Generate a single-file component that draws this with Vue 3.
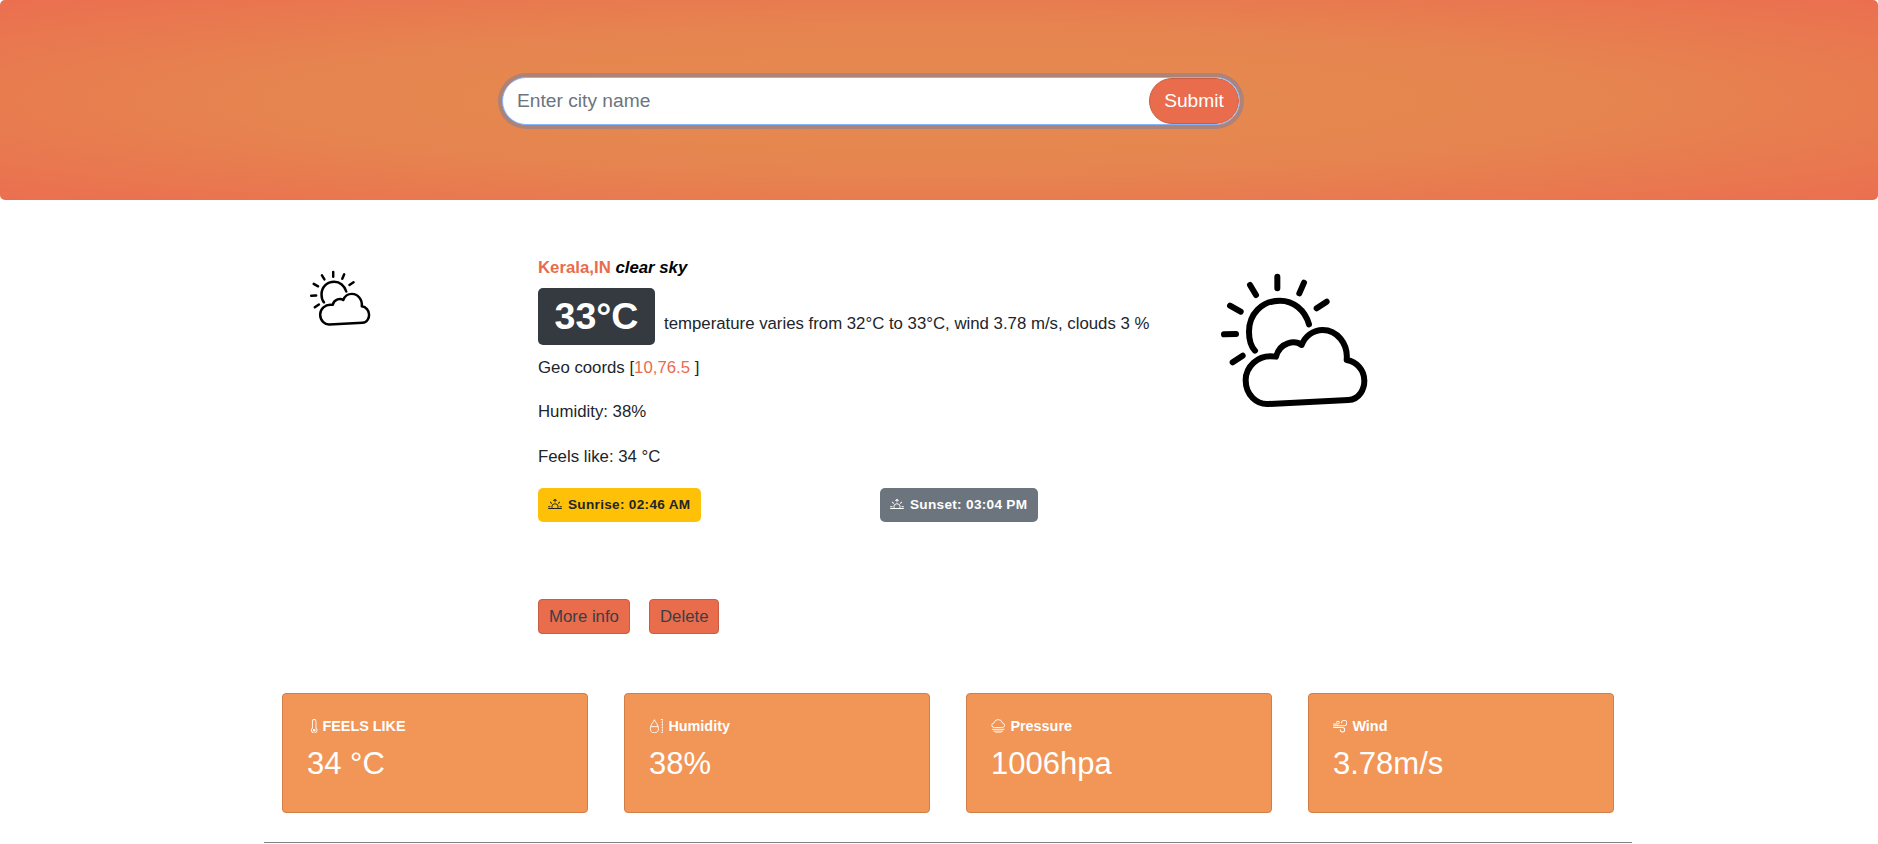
<script setup>
const cloudRays = 'M232 50V85M150 75L168 105M312 68L298 100M380 125L350 145M90 137L122 155M72 223L108 222M128 287L98 307'
const cloudSun = 'M327 193C315 150 280 122 240 122C185 122 147 162 147 215C147 240 152 258 165 272'
const cloudBody = 'M205 432L445 420C480 418 493 385 493 362C493 330 470 305 440 300C445 250 410 210 368 210C340 210 315 228 305 255C285 240 240 245 228 290C170 280 137 325 137 360C137 405 170 434 205 432Z'

const sunrise = 'M7.646 1.146a.5.5 0 0 1 .708 0l1.5 1.5a.5.5 0 0 1-.708.708L8.5 2.707V4.5a.5.5 0 0 1-1 0V2.707l-.646.647a.5.5 0 1 1-.708-.708l1.5-1.5zM2.343 4.343a.5.5 0 0 1 .707 0l1.414 1.414a.5.5 0 0 1-.707.707L2.343 5.05a.5.5 0 0 1 0-.707zm11.314 0a.5.5 0 0 1 0 .707l-1.414 1.414a.5.5 0 1 1-.707-.707l1.414-1.414a.5.5 0 0 1 .707 0zM8 7a3 3 0 0 1 2.599 4.5H5.4A3 3 0 0 1 8 7zm3.71 4.5a4 4 0 1 0-7.418 0H.499a.5.5 0 0 0 0 1h15a.5.5 0 0 0 0-1h-3.79zM0 10a.5.5 0 0 1 .5-.5h2a.5.5 0 0 1 0 1h-2A.5.5 0 0 1 0 10zm13 0a.5.5 0 0 1 .5-.5h2a.5.5 0 0 1 0 1h-2a.5.5 0 0 1-.5-.5z'

const cards = [
  { id: 'feels', label: 'FEELS LIKE', value: '34 °C' },
  { id: 'humidity', label: 'Humidity', value: '38%' },
  { id: 'pressure', label: 'Pressure', value: '1006hpa' },
  { id: 'wind', label: 'Wind', value: '3.78m/s' }
]
</script>

<template>
  <div class="page">
    <header class="hero">
      <form class="search" @submit.prevent>
        <input class="search-input" type="text" placeholder="Enter city name" />
        <button class="search-btn" type="submit">Submit</button>
      </form>
    </header>

    <main class="content">
      <section class="weather">
        <div class="side-icon">
          <svg class="icon-small" viewBox="0 0 570 480" fill="none" stroke="#000" stroke-width="18" stroke-linecap="round" stroke-linejoin="round">
            <path :d="cloudRays" />
            <path :d="cloudSun" />
            <path :d="cloudBody" />
          </svg>
        </div>

        <div class="info">
          <h6 class="title"><span class="city">Kerala,IN</span> <em>clear sky</em></h6>
          <div class="temp-row">
            <span class="temp">33°C</span>
            <span class="temp-text">temperature varies from 32°C to 33°C, wind 3.78 m/s, clouds 3 %</span>
          </div>
          <p class="first">Geo coords [<span class="coords">10,76.5</span> ]</p>
          <p>Humidity: 38%</p>
          <p class="last">Feels like: 34 °C</p>
          <div class="pills">
            <span class="pill pill-sunrise">
              <svg viewBox="0 0 16 16" fill="currentColor"><path :d="sunrise" /></svg>
              Sunrise: 02:46 AM
            </span>
            <span class="pill pill-sunset">
              <svg viewBox="0 0 16 16" fill="currentColor"><path :d="sunrise" /></svg>
              Sunset: 03:04 PM
            </span>
          </div>
          <div class="actions">
            <button class="btn" type="button">More info</button>
            <button class="btn" type="button">Delete</button>
          </div>
        </div>

        <svg class="icon-big" viewBox="0 0 570 480" fill="none" stroke="#000" stroke-width="18" stroke-linecap="round" stroke-linejoin="round">
          <path :d="cloudRays" />
          <path :d="cloudSun" />
          <path :d="cloudBody" />
        </svg>
      </section>

      <section class="cards">
        <div class="card" v-for="card in cards" :key="card.id">
          <div class="card-label" :class="{ tight: card.id === 'feels' }">
            <svg v-if="card.id === 'feels'" viewBox="0 0 16 16" fill="#fff">
              <path d="M8 14a1.5 1.5 0 1 0 0-3 1.5 1.5 0 0 0 0 3z" />
              <path d="M8 0a2.5 2.5 0 0 0-2.5 2.5v7.55a3.5 3.5 0 1 0 5 0V2.5A2.5 2.5 0 0 0 8 0zM6.5 2.5a1.5 1.5 0 1 1 3 0v7.987l.167.15a2.5 2.5 0 1 1-3.333 0l.166-.15V2.5z" />
            </svg>
            <svg v-else-if="card.id === 'humidity'" viewBox="0 0 16 16" fill="none" stroke="#fff" stroke-width="1">
              <path d="M6 .8C5 3.500 1.500 6.500 1.500 10.800a4.500 4.500 0 0 0 9 0C10.500 6.500 7 3.500 6 .8Z" />
              <path d="M2 8.500h8" />
              <path d="M13 .5h2.500v15H13M14 3.500h1.500M14 6.500h1.500M14 9.500h1.500M14 12.500h1.500" />
            </svg>
            <svg v-else-if="card.id === 'pressure'" viewBox="0 0 16 16" fill="none" stroke="#fff" stroke-width="1" stroke-linecap="round">
              <path d="M3.500 9.500A2.500 2.500 0 0 1 3.300 4.500 4.800 4.800 0 0 1 12.700 4.500 2.500 2.500 0 0 1 12.500 9.500Z" />
              <path d="M1.500 11.500h13M3 13.500h10M5 15.500h6" />
            </svg>
            <svg v-else viewBox="0 0 16 16" fill="#fff">
              <path d="M12.500 2A2.500 2.500 0 0 0 10 4.500a.5.5 0 0 1-1 0A3.500 3.500 0 1 1 12.500 8H.5a.5.5 0 0 1 0-1h12a2.500 2.500 0 0 0 0-5zm-7 1a1 1 0 0 0-1 1 .5.5 0 0 1-1 0 2 2 0 1 1 2 2h-5a.5.5 0 0 1 0-1h5a1 1 0 0 0 0-2zM0 9.500A.5.5 0 0 1 .5 9h10.042a3 3 0 1 1-3 3 .5.5 0 0 1 1 0 2 2 0 1 0 2-2H.5a.5.5 0 0 1-.5-.5z" />
            </svg>
            {{ card.label }}
          </div>
          <div class="card-value">{{ card.value }}</div>
        </div>
      </section>

      <hr class="rule" />
    </main>
  </div>
</template>

<style>
html, body {
  margin: 0;
  background: #fff;
  overflow: hidden;
}
</style>

<style scoped>
.page {
  font-family: "Liberation Sans", Arial, sans-serif;
  font-size: 16.8px;
  line-height: 24px;
  color: #212529;
}

.hero {
  height: 200px;
  box-sizing: border-box;
  padding: 77px 0 0 502px;
  border-radius: 5px;
  background: radial-gradient(ellipse at center, #e58c50 0%, #e6844f 52%, #eb6f4f 100%);
}

.search {
  display: flex;
  width: 738px;
  height: 48px;
  box-sizing: border-box;
  border: 1px solid #86b7fe;
  border-radius: 24px;
  background: #fff;
  box-shadow: 0 0 0 4px rgba(120, 125, 160, 0.5);
  overflow: hidden;
}

.search-input {
  flex: 1;
  min-width: 0;
  border: 0;
  outline: 0;
  padding: 0 14px;
  font-family: inherit;
  font-size: 19.2px;
  background: transparent;
}

.search-input::placeholder {
  color: #6c757d;
}

.search-btn {
  width: 90px;
  border: 1px solid #c85d43;
  border-radius: 24px;
  background: #e96c4d;
  color: #fff;
  font-family: inherit;
  font-size: 19.2px;
  padding: 0;
}

.content {
  width: 1368px;
  margin-left: 264px;
}

.weather {
  display: flex;
  height: 493px;
}

.side-icon {
  width: 274px;
  padding: 65px 0 0 37px;
  box-sizing: border-box;
}

.icon-small {
  display: block;
  width: 79px;
  height: 66px;
}

.info {
  width: 662px;
  padding-top: 56px;
  box-sizing: border-box;
}

.icon-big {
  display: block;
  width: 190px;
  height: 160px;
  margin-top: 60px;
}

.title {
  margin: 0 0 8px;
  font-size: 16.8px;
  line-height: 24px;
  font-weight: 700;
  color: #000;
}

.city {
  color: #e96c4d;
}

.temp-row {
  display: flex;
  align-items: flex-end;
  gap: 9px;
  margin: 0 0 11px;
}

.temp {
  display: block;
  flex: none;
  width: 117px;
  height: 57px;
  border-radius: 5px;
  background: #343a40;
  color: #fff;
  font-size: 37.6px;
  line-height: 57px;
  font-weight: 700;
  text-align: center;
}

.temp-text {
  line-height: 24px;
  padding-bottom: 9px;
  white-space: nowrap;
}

p {
  margin: 0 0 21px;
}

p.first {
  margin-bottom: 20px;
}

p.last {
  margin-bottom: 19px;
}

.coords {
  color: #e96c4d;
}

.pills {
  display: flex;
  height: 34px;
}

.pill {
  display: flex;
  align-items: center;
  gap: 6px;
  height: 34px;
  box-sizing: border-box;
  border-radius: 5px;
  padding: 0 10px;
  font-size: 13.6px;
  font-weight: 700;
  letter-spacing: 0.3px;
  white-space: nowrap;
}

.pill svg {
  flex: none;
  width: 14px;
  height: 14px;
}

.pill-sunrise {
  width: 163px;
  margin-right: 179px;
  background: #ffc107;
  color: #212529;
}

.pill-sunset {
  width: 158px;
  background: #6c757d;
  color: #fff;
}

.actions {
  display: flex;
  gap: 19px;
  margin-top: 77px;
}

.btn {
  height: 35px;
  box-sizing: border-box;
  padding: 0 10px;
  border: 1px solid #c85d43;
  border-radius: 4px;
  background: #e96c4d;
  color: #3a3f44;
  font-family: inherit;
  font-size: 16.8px;
}

.cards {
  display: grid;
  grid-template-columns: repeat(4, 306px);
  gap: 36px;
  padding-left: 18px;
}

.card {
  height: 120px;
  box-sizing: border-box;
  padding: 22px 23px 0 24px;
  border: 1px solid #d27e49;
  border-radius: 4px;
  background: #f19657;
  color: #fff;
}

.card-label {
  display: flex;
  align-items: center;
  gap: 5px;
  height: 20px;
  font-size: 14.4px;
  font-weight: 700;
  white-space: nowrap;
}

.card-label.tight {
  gap: 1px;
}

.card-label svg {
  flex: none;
  width: 14.4px;
  height: 14.4px;
}

.card-value {
  margin-top: 11px;
  font-size: 31px;
  line-height: 34px;
}

.rule {
  margin: 29px 0 0;
  border: 0;
  border-top: 1px solid #808080;
}
</style>
